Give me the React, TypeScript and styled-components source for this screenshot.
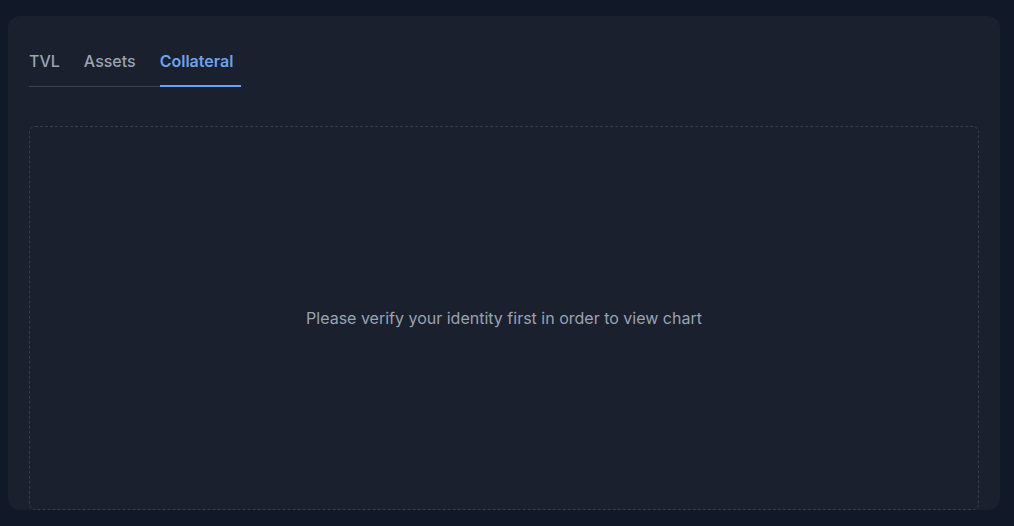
import React, { useState } from "react";
import styled, { createGlobalStyle } from "styled-components";

const Global = createGlobalStyle`
  html, body { margin: 0; padding: 0; background: #111827; }
  body { font-family: Inter, "Noto Sans", sans-serif; }
  * { box-sizing: border-box; }
`;

const Page = styled.div`
  width: 1014px;
  height: 526px;
  padding: 16px 14px 16px 8px;
  background: #111827;
  overflow: hidden;
`;

const Card = styled.section`
  height: 494px;
  background: #1a202d;
  border-radius: 12px;
  padding: 32px 21px 0;
  display: flex;
  flex-direction: column;
  overflow: hidden;
`;

const TabList = styled.div`
  display: flex;
  align-self: flex-start;
  border-bottom: 1px solid #3a4250;
`;

const Tab = styled.button<{ $active: boolean }>`
  background: none;
  border: none;
  padding: 0 8px 11px 0;
  margin: 0 16px -1px 0;
  font-family: Inter, "Noto Sans", sans-serif;
  font-size: 16px;
  line-height: 26px;
  font-weight: ${(p) => (p.$active ? 600 : 500)};
  color: ${(p) => (p.$active ? "#6ea2ee" : "#9aa3b2")};
  border-bottom: 2px solid ${(p) => (p.$active ? "#6ea2ee" : "transparent")};
  cursor: pointer;
  &:last-child { margin-right: 0; }
`;

const ChartBox = styled.div`
  margin-top: 39px;
  height: 384px;
  border: 1px dashed #353d4a;
  border-radius: 6px;
  display: flex;
  align-items: center;
  justify-content: center;
  flex-shrink: 0;
`;

const Message = styled.p`
  margin: 0;
  font-size: 16px;
  line-height: 24px;
  color: #9aa3b2;
`;

const tabs = ["TVL", "Assets", "Collateral"];

export default function App() {
  const [active, setActive] = useState("Collateral");
  return (
    <>
      <Global />
      <Page>
        <Card>
          <TabList>
            {tabs.map((t) => (
              <Tab key={t} $active={t === active} onClick={() => setActive(t)}>
                {t}
              </Tab>
            ))}
          </TabList>
          <ChartBox>
            <Message>Please verify your identity first in order to view chart</Message>
          </ChartBox>
        </Card>
      </Page>
    </>
  );
}
